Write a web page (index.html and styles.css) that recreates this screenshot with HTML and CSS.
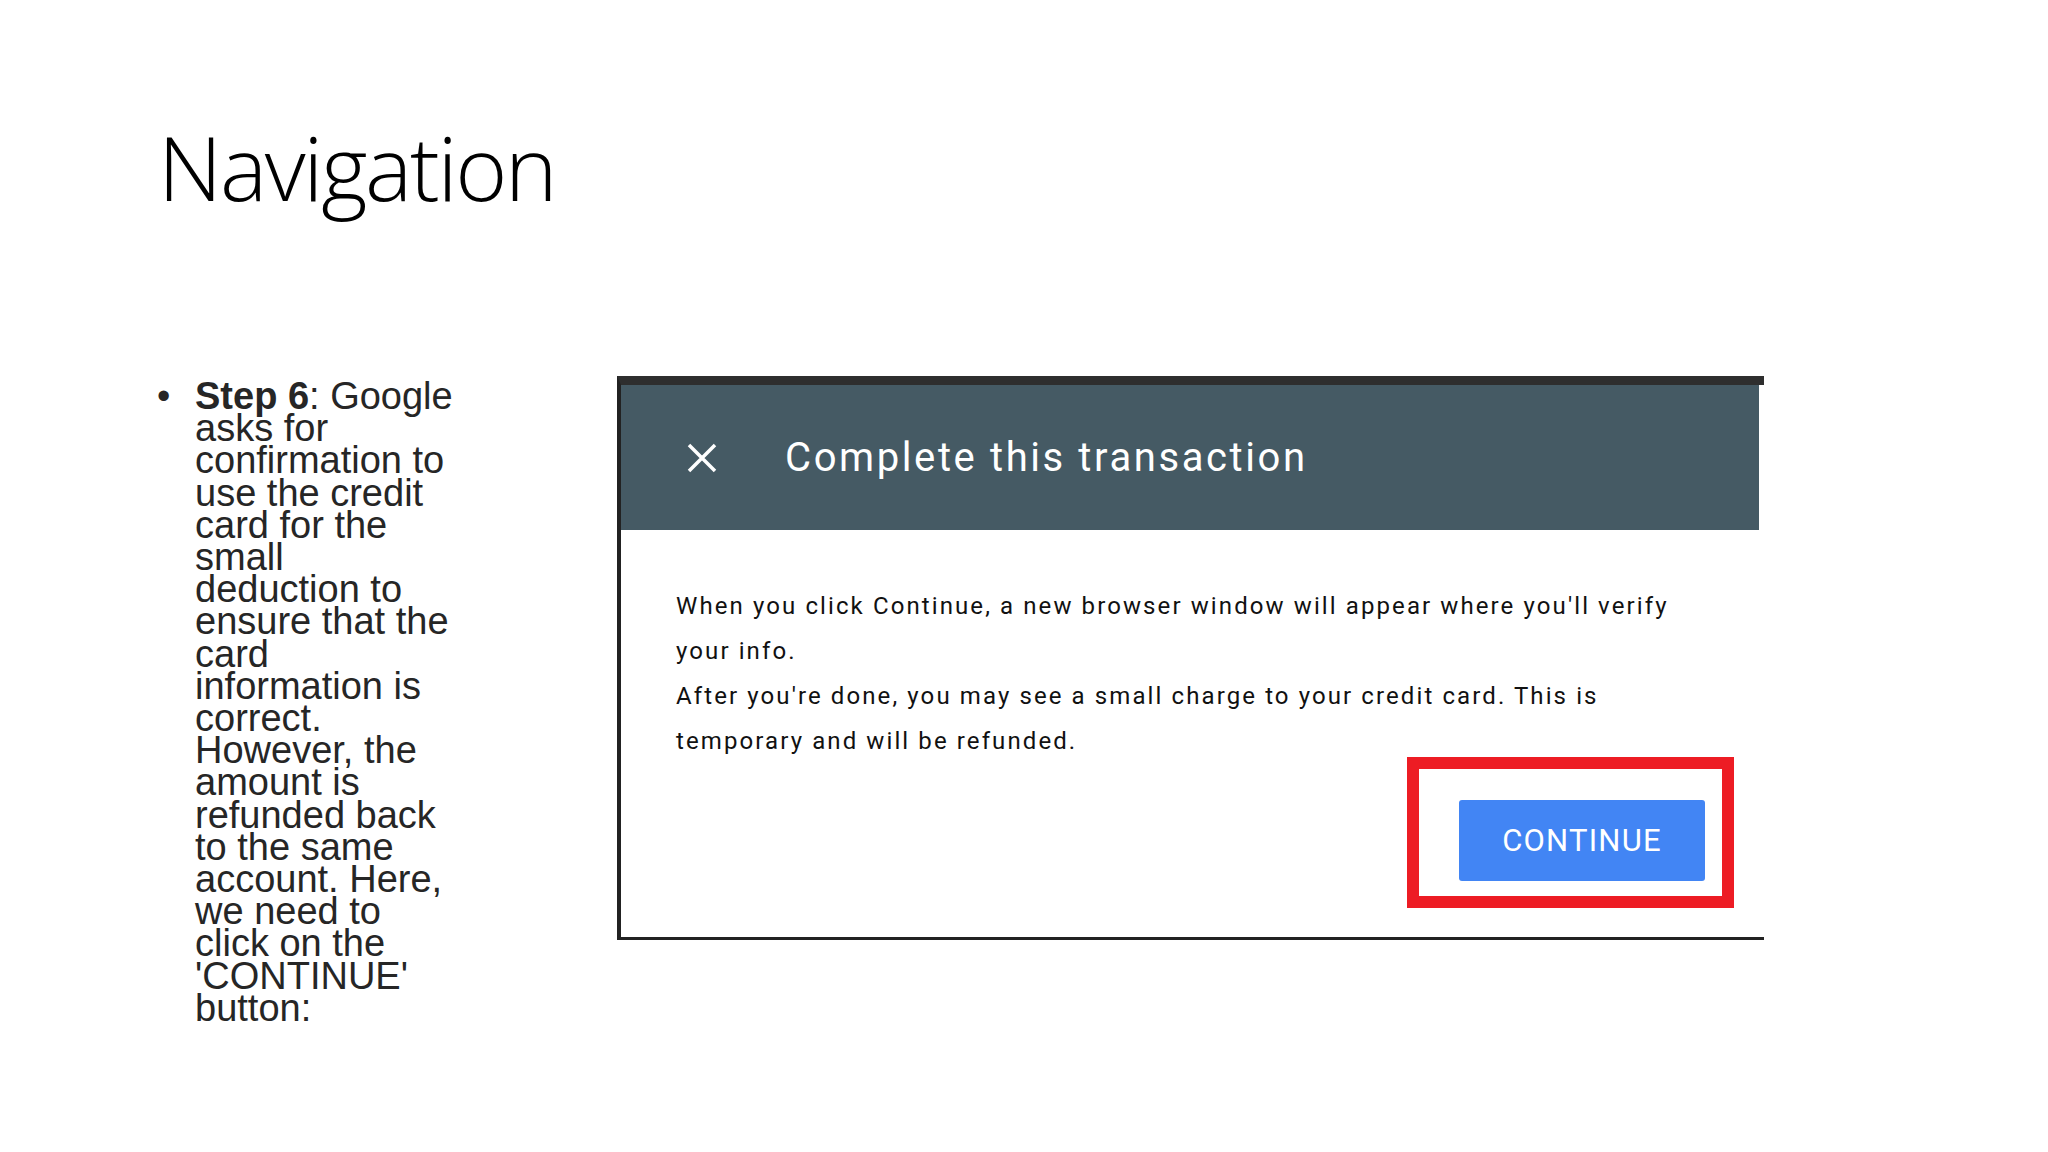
FILE: index.html
```
<!DOCTYPE html>
<html lang="en">
  <head>
    <meta charset="UTF-8" />
    <meta name="viewport" content="width=device-width, initial-scale=1.0" />
    <title>Navigation</title>
    <link rel="stylesheet" href="styles.css">
  </head>
  <body>
    <div class="slide">
      <h1 class="title">Navigation</h1>
      <div class="content">
        <ul class="steps">
          <li>
            <span class="dot">&bull;</span>
            <span class="step-text"><b>Step 6</b>: Google asks for confirmation to use the credit card for the small deduction to ensure that the card information is correct. However, the amount is refunded back to the same account. Here, we need to click on the 'CONTINUE' button:</span>
          </li>
        </ul>

        <div class="shot">
          <div class="dialog-head">
            <svg class="close" width="32" height="32" viewBox="0 0 32 32">
              <path d="M3 3 L29 29 M29 3 L3 29" stroke="#fff" stroke-width="3.5" fill="none" />
            </svg>
            <span class="dialog-title">Complete this transaction</span>
          </div>
          <div class="dialog-body">
            <p class="dialog-text">When you click Continue, a new browser window will appear where you'll verify<br>your info.<br>After you're done, you may see a small charge to your credit card. This is<br>temporary and will be refunded.</p>
            <div class="actions">
              <div class="highlight">
                <button class="continue">CONTINUE</button>
              </div>
            </div>
          </div>
        </div>
      </div>
    </div>
  </body>
</html>
```

FILE: styles.css
```
body {
  margin: 0;
  background-color: #fff;
}
.slide {
  width: 2048px;
  height: 1152px;
  overflow: hidden;
}
.title {
  margin: 0;
  padding: 122px 0 0 158px;
  font-family: "Open Sans", sans-serif;
  font-weight: 300;
  font-size: 89px;
  line-height: 1;
  letter-spacing: -2.3px;
  color: #000;
}
.content {
  display: flex;
  align-items: flex-start;
  margin-top: 165px;
  padding-left: 157px;
}
.steps {
  list-style: none;
  margin: 0;
  padding: 4px 0 0 0;
  width: 302px;
  font-family: "Liberation Sans", Arial, sans-serif;
  font-size: 38px;
  line-height: 32.2px;
  color: #262626;
}
.steps li {
  display: flex;
}
.dot {
  width: 38px;
  flex-shrink: 0;
}
.step-text {
  width: 264px;
}
.shot {
  margin-left: 158px;
  width: 1143px;
  border-left: 4px solid #222;
  border-top: 9px solid #2e2e2e;
  border-bottom: 3px solid #222;
  background-color: #fff;
}
.dialog-head {
  display: flex;
  align-items: center;
  height: 145px;
  margin-right: 5px;
  padding-left: 65px;
  background-color: #455a64;
}
.close {
  flex-shrink: 0;
}
.dialog-title {
  margin-left: 67px;
  font-family: Roboto, sans-serif;
  font-size: 40px;
  letter-spacing: 2.6px;
  color: #fff;
}
.dialog-body {
  padding: 54px 30px 29px 55px;
}
.dialog-text {
  margin: 0;
  font-family: Roboto, sans-serif;
  font-size: 24px;
  line-height: 45px;
  letter-spacing: 2.1px;
  color: #111;
  white-space: nowrap;
}
.actions {
  display: flex;
  justify-content: flex-end;
  margin-top: -7px;
}
.highlight {
  border: 12px solid #ed1c24;
  padding: 31px 17px 15px 40px;
}
.continue {
  display: block;
  width: 246px;
  height: 81px;
  border: 0;
  border-radius: 3px;
  background-color: #4285f4;
  color: #fff;
  font-family: Roboto, sans-serif;
  font-size: 31px;
  letter-spacing: 1.2px;
}
```
